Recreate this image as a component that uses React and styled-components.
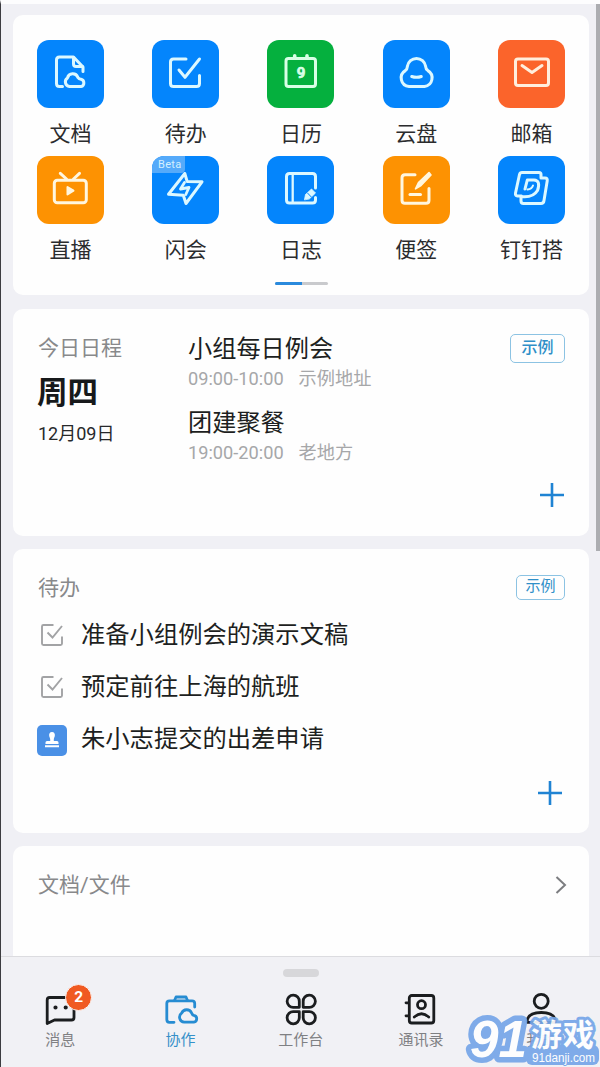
import React from 'react';
import styled, { createGlobalStyle } from 'styled-components';

const GlobalStyle = createGlobalStyle`
  * { box-sizing: border-box; }
  body { margin: 0; background: #f0f0f5; }
`;

const Screen = styled.div`
  position: relative;
  display: flex;
  flex-direction: column;
  width: 600px;
  height: 1067px;
  overflow: hidden;
  background: #f0f0f5;
  border-left: 1px solid #3c3c40;
  border-top: 4px solid #fdfdfe;
  font-family: Roboto, 'Noto Sans CJK SC', sans-serif;
  color: #1d1f21;
  white-space: nowrap;
`;

const Feed = styled.main`
  flex: 1;
  min-height: 0;
  overflow: hidden;
  padding: 11px 11px 0 12px;
`;

const Card = styled.section`
  height: ${(p) => p.$height}px;
  margin-bottom: ${(p) => p.$gap || 13}px;
  padding: ${(p) => p.$pad || '24px 24px 0 25px'};
  background: #fefefe;
  border-radius: 10px;
`;

const ScrollThumb = styled.div`
  position: absolute;
  top: 0;
  right: 0;
  width: 4px;
  height: 547px;
  background: #acadb1;
`;

const AppGrid = styled.div`
  display: grid;
  grid-template-columns: repeat(5, 1fr);
  grid-auto-rows: 116px;
`;

const AppItem = styled.div`
  display: flex;
  flex-direction: column;
  align-items: center;
`;

const Tile = styled.div`
  position: relative;
  width: 67px;
  height: 68px;
  border-radius: 12px;
  background: ${(p) => p.$color};
  overflow: hidden;
`;

const TileIcon = styled.svg`
  display: block;
  width: 67px;
  height: 68px;
  fill: none;
  stroke: ${(p) => p.$tint};
  stroke-width: 3;
  stroke-linecap: round;
  stroke-linejoin: round;
`;

const AppLabel = styled.span`
  margin-top: 11px;
  font-size: 21px;
  line-height: 30px;
  color: #2b2c2e;
`;

const BetaTag = styled.span`
  position: absolute;
  left: 0;
  top: 0;
  width: 33px;
  height: 17px;
  padding-left: 2px;
  border-bottom-right-radius: 4px;
  background: #55aafa;
  color: #d4efff;
  font-size: 11px;
  line-height: 17px;
  letter-spacing: 0.3px;
  text-align: center;
`;

const Pager = styled.div`
  display: flex;
  width: 53px;
  height: 3px;
  margin: 10px auto 0;
  border-radius: 2px;
  overflow: hidden;
  background: #c9cacd;
`;

const PagerActive = styled.div`
  width: 27px;
  background: #2a8add;
`;

const Agenda = styled.div`
  display: flex;
  height: 149px;
`;

const DateColumn = styled.div`
  display: flex;
  flex-direction: column;
  width: 150px;
`;

const SectionTitle = styled.h2`
  margin: 0;
  font-size: 21px;
  font-weight: 400;
  line-height: 30px;
  color: #88898b;
`;

const Weekday = styled.strong`
  margin-top: 9px;
  margin-left: -1px;
  font-size: 30.5px;
  font-weight: 700;
  line-height: 42px;
  color: #17191b;
`;

const DateText = styled.span`
  margin-top: 7px;
  font-size: 18px;
  line-height: 26px;
  color: #27292b;
`;

const Events = styled.div`
  flex: 1;
`;

const Event = styled.div`
  height: 73.5px;
`;

const EventTitle = styled.div`
  font-size: 24.2px;
  line-height: 32px;
`;

const EventMeta = styled.div`
  display: flex;
  gap: 15px;
  font-size: 18.2px;
  line-height: 28px;
  color: #a6a7a9;
`;

const SampleTag = styled.span`
  flex: none;
  width: ${(p) => (p.$small ? 49 : 55)}px;
  height: ${(p) => (p.$small ? 25 : 29)}px;
  margin-top: ${(p) => (p.$small ? 2 : 1)}px;
  border: 1.4px solid #8cc3e3;
  border-radius: 5px;
  font-size: ${(p) => (p.$small ? 15 : 16)}px;
  font-weight: ${(p) => (p.$small ? 400 : 500)};
  line-height: ${(p) => (p.$small ? 21 : 25)}px;
  text-align: center;
  color: #2f8fc8;
`;

const AddRow = styled.div`
  display: flex;
  justify-content: flex-end;
  margin-right: ${(p) => p.$inset || 0}px;
`;

const PlusIcon = styled.svg`
  width: 26px;
  height: 26px;
  fill: none;
  stroke: #1f83d3;
  stroke-width: 2.6;
`;

const CardHeader = styled.div`
  display: flex;
  justify-content: space-between;
  align-items: flex-start;
`;

const TaskList = styled.div`
  height: 177px;
  padding-top: 6px;
`;

const Task = styled.div`
  display: flex;
  align-items: center;
  height: 52px;
`;

const TaskText = styled.span`
  font-size: 24.3px;
  line-height: 34px;
`;

const TaskMark = styled.div`
  display: flex;
  justify-content: center;
  width: 30px;
  margin: 0 14px 0 -1px;
`;

const CheckIcon = styled.svg`
  width: 24px;
  height: 24px;
  fill: none;
  stroke: #a2a3a5;
  stroke-width: 1.9;
`;

const Avatar = styled.div`
  display: flex;
  align-items: center;
  justify-content: center;
  width: 30px;
  height: 31px;
  margin-top: 2px;
  border-radius: 5px;
  background: #4a90e6;
`;

const Chevron = styled.svg`
  width: 12px;
  height: 20px;
  margin: 5px -2px 0 0;
  fill: none;
  stroke: #7c7d80;
  stroke-width: 2;
`;

const NavBar = styled.nav`
  flex: none;
  height: 111px;
  border-top: 1px solid #dcdce0;
  background: #f1f1f5;
`;

const Handle = styled.div`
  width: 36px;
  height: 8px;
  margin: 12px auto 0;
  border-radius: 4px;
  background: #d7d7da;
`;

const NavItems = styled.div`
  display: grid;
  grid-template-columns: repeat(5, 120.3px);
  margin: 17px 0 0 -1px;
`;

const NavItem = styled.div`
  display: flex;
  flex-direction: column;
  align-items: center;
  font-size: 15px;
  line-height: 22px;
  color: ${(p) => (p.$active ? '#3590c9' : '#7f8083')};
`;

const NavFigure = styled.div`
  position: relative;
  width: 32px;
  height: 32px;
  margin-bottom: 3px;
`;

const NavIcon = styled.svg`
  display: block;
  width: 32px;
  height: 32px;
  overflow: visible;
  fill: none;
  stroke: ${(p) => (p.$active ? '#268cd2' : '#1b1d1f')};
  stroke-width: 2.8;
  stroke-linecap: round;
  stroke-linejoin: round;
`;

const UnreadBadge = styled.span`
  position: absolute;
  left: 21px;
  top: -10px;
  width: 27px;
  height: 27px;
  border: 1.5px solid #fbf4f2;
  border-radius: 50%;
  background: #f05a22;
  color: #fff;
  font-size: 15.5px;
  font-weight: 700;
  line-height: 25px;
  text-align: center;
`;

const Watermark = styled.svg`
  position: absolute;
  right: 0;
  bottom: 0;
  width: 136px;
  height: 60px;
  overflow: visible;
  opacity: 0.92;
`;

const BLUE = '#0485fc';
const ORANGE = '#fd9202';
const ICE = '#dcf8ff';
const CREAM = '#fff6df';

const apps = [
  {
    label: '文档', color: BLUE, tint: ICE,
    art: (
      <>
        <path d="M25.5 46.5H22.5Q19.5 46.5 19.5 43.5V20Q19.5 17 22.5 17H36.5L46 27V31.5" />
        <path d="M36.5 17.5V24Q36.5 26.5 39 26.5H45.5" />
        <path d="M32.5 46.5A4.7 4.7 0 0 1 30.5 37.9A5.4 5.4 0 0 1 40.8 37.3Q42 39 44 39.3A3.7 3.7 0 0 1 44 46.5Z" />
      </>
    ),
  },
  {
    label: '待办', color: BLUE, tint: ICE,
    art: (
      <>
        <path d="M34 19H21.5Q18.5 19 18.5 22V43.5Q18.5 46.5 21.5 46.5H44.5Q47.5 46.5 47.5 43.5V35.5" />
        <path d="M27 30L33 37.3L47.5 19" />
      </>
    ),
  },
  {
    label: '日历', color: '#05b03e', tint: '#d8ffe6',
    art: (
      <>
        <rect x="19" y="18.5" width="29.5" height="28" rx="2.5" />
        <path d="M27.7 15.8V18M40 15.8V18" strokeWidth="3.6" />
        <text x="34" y="38.3" fontSize="15" fontWeight="700" textAnchor="middle" fill="#d8ffe6" stroke="#d8ffe6" strokeWidth="0.7">9</text>
      </>
    ),
  },
  {
    label: '云盘', color: BLUE, tint: ICE,
    art: (
      <>
        <path d="M26 46.5A8.6 8.6 0 0 1 22.3 30.6Q24.2 29.2 24.4 26.3A9.2 9.2 0 0 1 42.6 26.3Q42.8 29.2 44.9 30.6A8.6 8.6 0 0 1 41.5 46.5Z" />
        <path d="M28.7 36.5Q33.5 38.2 38.3 36.5" />
      </>
    ),
  },
  {
    label: '邮箱', color: '#fb642b', tint: '#ffeedd',
    art: (
      <>
        <rect x="17.5" y="19" width="33" height="26.5" rx="2.5" />
        <path d="M24 25.5L34 32.5L44 25.5" />
      </>
    ),
  },
  {
    label: '直播', color: ORANGE, tint: CREAM,
    art: (
      <>
        <rect x="17.3" y="24.3" width="32" height="22.5" rx="3" />
        <path d="M23.3 17.3L29.5 23M42.5 17.3L36.5 23" />
        <path d="M30.5 31V38.5L36.5 34.7Z" fill={CREAM} strokeWidth="2" />
      </>
    ),
  },
  {
    label: '闪会', color: BLUE, tint: ICE, beta: true,
    art: (
      <>
        <path d="M32.8 17.5L16.5 38.3L31.3 39.2L34 47.5L50 25.8L35.2 25.6Z" />
        <path d="M32.5 26.5L28.5 33L37 31.5L33.8 38.5" strokeWidth="2.8" />
      </>
    ),
  },
  {
    label: '日志', color: BLUE, tint: ICE,
    art: (
      <>
        <path d="M48.5 32V20.5Q48.5 17.5 45.5 17.5H22.5Q19.5 17.5 19.5 20.5V44Q19.5 47 22.5 47H45.5Q48.5 47 48.5 44V41.5" />
        <path d="M25.7 18V46.5" strokeWidth="2.3" />
        <path d="M37.5 43.5L38.5 38.5L44.5 33L48.5 37L42.5 42.8Z" fill={ICE} strokeWidth="0.8" />
        <path d="M40.5 37L44.3 41" stroke={BLUE} strokeWidth="1" />
      </>
    ),
  },
  {
    label: '便签', color: ORANGE, tint: CREAM,
    art: (
      <>
        <path d="M32 18.7H22Q19 18.7 19 21.7V44.3Q19 47.3 22 47.3H43Q46 47.3 46 44.3V32.5" />
        <path d="M32.5 32.8L35.5 26.5L46 16.6L48 19L38 29.5Z" fill={CREAM} strokeWidth="1.6" />
        <path d="M27 38.5H37.5" />
      </>
    ),
  },
  {
    label: '钉钉搭', color: BLUE, tint: ICE,
    art: (
      <>
        <path d="M23.5 40H19.5Q17 39.8 17.5 37L21.5 18.5Q22 16.5 24 16.5H41Q43 16.5 43 18.5V22H47Q49.7 22 49.2 25L46 44.5Q45.6 47.5 43 47.5H25.5Q23 47.5 23 45V40.5Q35 42 39.5 34.5Q43 24.5 36 24H29.3L27 33" />
        <path d="M29.5 33.5Q34 33 35 29.5" strokeWidth="2" />
      </>
    ),
  },
];

const events = [
  { title: '小组每日例会', time: '09:00-10:00', place: '示例地址' },
  { title: '团建聚餐', time: '19:00-20:00', place: '老地方' },
];

const tasks = [
  { text: '准备小组例会的演示文稿' },
  { text: '预定前往上海的航班' },
  { text: '朱小志提交的出差申请', person: true },
];

const tabs = [
  {
    label: '消息', badge: '2',
    art: (
      <>
        <path d="M3.2 29.5V6Q3.2 3.5 5.7 3.5H27.5Q30 3.5 30 6V23.5Q30 26 27.5 26H10.5Z" />
        <circle cx="11.5" cy="13.5" r="1.2" fill="#1b1d1f" strokeWidth="1.8" />
        <circle cx="21.7" cy="13.5" r="1.2" fill="#1b1d1f" strokeWidth="1.8" />
      </>
    ),
  },
  {
    label: '协作', active: true,
    art: (
      <>
        <path d="M10 28.3H5.5Q2.8 28.3 2.8 25.5V9.5Q2.8 6.8 5.5 6.8H28Q30.7 6.8 30.7 9.5V13" />
        <path d="M10.5 6.5L12 3H22L23.5 6.5" />
        <path d="M20.2 28.2A5 5 0 0 1 17.6 19.2A5.4 5.4 0 0 1 27.6 19Q28.2 20.8 29.8 21.3A3.5 3.5 0 0 1 29.8 28.2Z" />
      </>
    ),
  },
  {
    label: '工作台',
    art: (
      <>
        <path d="M14.3 13.3H8.5A6.1 6.1 0 1 1 14.3 7.5Z" />
        <path d="M18.2 13.3H24A6.1 6.1 0 1 0 18.2 7.5Z" />
        <path d="M14.3 17.7H8.5A6.1 6.1 0 1 0 14.3 23.5Z" />
        <path d="M18.2 17.7H24A6.1 6.1 0 1 1 18.2 23.5Z" />
      </>
    ),
  },
  {
    label: '通讯录',
    art: (
      <>
        <rect x="4.3" y="1.5" width="24.5" height="27.5" rx="2.5" />
        <path d="M1 8.8H3.5M1 21.8H3.5" />
        <circle cx="16.5" cy="10.7" r="4" />
        <path d="M9.3 23Q16.5 16.5 23.7 23" />
      </>
    ),
  },
  {
    label: '我的',
    art: (
      <>
        <circle cx="16.2" cy="7.3" r="7" />
        <path d="M2.3 28.3V25.5Q4.5 18.5 16.3 18.5Q28 18.5 30.2 25.5V28.3Z" />
      </>
    ),
  },
];

function Plus() {
  return (
    <PlusIcon viewBox="0 0 26 26">
      <path d="M13 1V25M1 13H25" />
    </PlusIcon>
  );
}

export default function App() {
  return (
    <>
      <GlobalStyle />
      <Screen>
        <Feed>
          <Card $height={280} $gap={14} $pad="25px 0 0">
            <AppGrid>
              {apps.map((app) => (
                <AppItem key={app.label}>
                  <Tile $color={app.color}>
                    <TileIcon viewBox="0 0 67 68" $tint={app.tint}>{app.art}</TileIcon>
                    {app.beta && <BetaTag>Beta</BetaTag>}
                  </Tile>
                  <AppLabel>{app.label}</AppLabel>
                </AppItem>
              ))}
            </AppGrid>
            <Pager><PagerActive /></Pager>
          </Card>

          <Card $height={227}>
            <Agenda>
              <DateColumn>
                <SectionTitle>今日日程</SectionTitle>
                <Weekday>周四</Weekday>
                <DateText>12月09日</DateText>
              </DateColumn>
              <Events>
                {events.map((e) => (
                  <Event key={e.title}>
                    <EventTitle>{e.title}</EventTitle>
                    <EventMeta><span>{e.time}</span><span>{e.place}</span></EventMeta>
                  </Event>
                ))}
              </Events>
              <SampleTag>示例</SampleTag>
            </Agenda>
            <AddRow><Plus /></AddRow>
          </Card>

          <Card $height={284}>
            <CardHeader>
              <SectionTitle>待办</SectionTitle>
              <SampleTag $small>示例</SampleTag>
            </CardHeader>
            <TaskList>
              {tasks.map((t) => (
                <Task key={t.text}>
                  <TaskMark>
                    {t.person ? (
                      <Avatar>
                        <svg width="16" height="18" viewBox="0 0 16 18" fill="#fff">
                          <path d="M8 1C10.3 1 11.2 3 10.8 5C10.5 6.5 9.8 7.3 9.8 8.5V10H13Q14.5 10 14.5 11.5V13H1.5V11.5Q1.5 10 3 10H6.2V8.5C6.2 7.3 5.5 6.5 5.2 5C4.8 3 5.7 1 8 1ZM1 14.2H15V16.3H1Z" />
                        </svg>
                      </Avatar>
                    ) : (
                      <CheckIcon viewBox="0 0 24 24">
                        <path d="M13.5 2H3.5Q2 2 2 3.5V20.5Q2 22 3.5 22H20.5Q22 22 22 20.5V13.5" />
                        <path d="M7.5 9.5L12.5 14.5L22 3" />
                      </CheckIcon>
                    )}
                  </TaskMark>
                  <TaskText>{t.text}</TaskText>
                </Task>
              ))}
            </TaskList>
            <AddRow $inset={2}><Plus /></AddRow>
          </Card>

          <Card $height={130} $pad="24px 24px 0 25px">
            <CardHeader>
              <SectionTitle>文档/文件</SectionTitle>
              <Chevron viewBox="0 0 12 20"><path d="M1.5 2L10 10L1.5 18" /></Chevron>
            </CardHeader>
          </Card>
        </Feed>

        <NavBar>
          <Handle />
          <NavItems>
            {tabs.map((tab) => (
              <NavItem key={tab.label} $active={tab.active}>
                <NavFigure>
                  <NavIcon viewBox="0 0 32 32" $active={tab.active}>{tab.art}</NavIcon>
                  {tab.badge && <UnreadBadge>{tab.badge}</UnreadBadge>}
                </NavFigure>
                {tab.label}
              </NavItem>
            ))}
          </NavItems>
        </NavBar>

        <ScrollThumb />
        <Watermark viewBox="0 0 136 60" strokeLinejoin="round">
          <rect x="62" y="38" width="73" height="20" rx="6" fill="#76a6e8" />
          <g fill="#fff" stroke="#76a6e8" style={{ paintOrder: 'stroke' }}>
            <text x="6" y="50" fontFamily="Liberation Sans, sans-serif" fontSize="52" fontWeight="700" fontStyle="italic" textLength="57" lengthAdjust="spacingAndGlyphs" strokeWidth="11">91</text>
            <text x="67" y="39" fontFamily="Noto Sans CJK SC, sans-serif" fontSize="31" fontWeight="700" textLength="63" strokeWidth="6">游戏</text>
            <text x="68" y="55" fontFamily="Liberation Sans, sans-serif" fontSize="12" textLength="63" lengthAdjust="spacingAndGlyphs" strokeWidth="2">91danji.com</text>
          </g>
        </Watermark>
      </Screen>
    </>
  );
}
